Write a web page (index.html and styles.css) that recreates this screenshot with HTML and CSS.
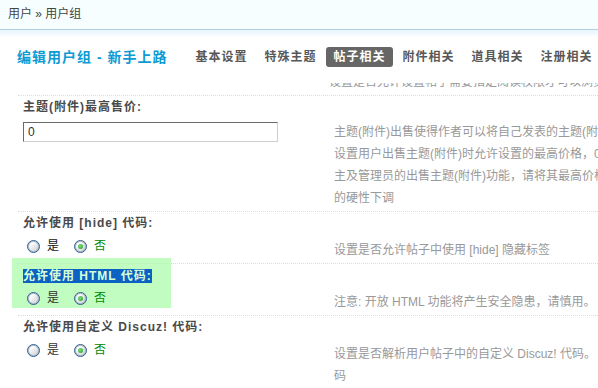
FILE: index.html
```html
<!DOCTYPE html>
<html lang="zh-CN">
<head>
<meta charset="utf-8">
<title>编辑用户组</title>
<link rel="stylesheet" href="styles.css">
</head>
<body>
<div class="crumb">用户 » 用户组</div>
<div class="band"></div>
<div class="head">
  <h3 class="title">编辑用户组 - 新手上路</h3>
  <ul class="tabs">
    <li class="tab">基本设置</li>
    <li class="tab">特殊主题</li>
    <li class="tab active">帖子相关</li>
    <li class="tab">附件相关</li>
    <li class="tab">道具相关</li>
    <li class="tab">注册相关</li>
  </ul>
</div>
<div class="main">
  <div class="clip">
    <div class="body">
      <div class="ctl"></div>
      <div class="desc clipdesc"><div class="line">设置是否允许设置帖子需要指定阅读权限才可以浏览，阅读权限</div></div>
    </div>
  </div>

  <div class="row">
    <div class="label">主题(附件)最高售价:</div>
    <div class="body">
      <div class="ctl ctl-input"><div class="input">0</div></div>
      <div class="desc desc-input">
        <div class="line">主题(附件)出售使得作者可以将自己发表的主题(附件)定价出售，其他用户需支付</div>
        <div class="line">设置用户出售主题(附件)时允许设置的最高价格，0 为不允许用户出售。如需关闭版</div>
        <div class="line">主及管理员的出售主题(附件)功能，请将其最高价格设置为 0，注意：修改此项目会</div>
        <div class="line">的硬性下调</div>
      </div>
    </div>
  </div>

  <div class="row">
    <div class="label">允许使用 [hide] 代码:</div>
    <div class="body">
      <div class="ctl">
        <div class="radios">
          <span class="radio"></span><span class="opt opt-dark">是</span>
          <span class="radio on"></span><span class="opt opt-on">否</span>
        </div>
      </div>
      <div class="desc"><div class="line">设置是否允许帖子中使用 [hide] 隐藏标签</div></div>
    </div>
  </div>

  <div class="row hl">
    <div class="label"><span class="sel">允许使用 HTML 代码:</span></div>
    <div class="body">
      <div class="ctl">
        <div class="radios">
          <span class="radio"></span><span class="opt">是</span>
          <span class="radio on"></span><span class="opt opt-on">否</span>
        </div>
      </div>
      <div class="desc"><div class="line">注意: 开放 HTML 功能将产生安全隐患，请慎用。</div></div>
    </div>
  </div>

  <div class="row">
    <div class="label">允许使用自定义 Discuz! 代码:</div>
    <div class="body">
      <div class="ctl">
        <div class="radios">
          <span class="radio"></span><span class="opt">是</span>
          <span class="radio on"></span><span class="opt opt-on">否</span>
        </div>
      </div>
      <div class="desc">
        <div class="line">设置是否解析用户帖子中的自定义 Discuz! 代码。</div>
        <div class="line">码</div>
      </div>
    </div>
  </div>
</div>
</body>
</html>
```

FILE: styles.css
```css
html {
  margin: 0;
  padding: 0;
  background: #fff;
}
body {
  margin: 0;
  padding: 0;
  width: 598px;
  height: 388px;
  overflow: hidden;
  font-family: "Liberation Sans", "Noto Sans CJK SC", sans-serif;
  font-size: 12px;
  color: #444;
}
.crumb {
  height: 29px;
  line-height: 29px;
  padding-left: 8px;
  background: #f6feff;
  border-bottom: 1px solid #b4cfe3;
  color: #444;
}
.band {
  height: 6px;
  background: linear-gradient(#eaf5fc, #f8fcff);
}
.head {
  display: flex;
  align-items: center;
  padding: 11px 0 0 17px;
  margin-bottom: 16px;
  white-space: nowrap;
}
.title {
  margin: 0 21px 0 0;
  font-size: 14px;
  line-height: 20px;
  font-weight: bold;
  letter-spacing: 1px;
  color: #0e9ad3;
}
.tabs {
  display: flex;
  gap: 3px;
  margin: 0;
  padding: 0;
  list-style: none;
}
.tab {
  padding: 0 7px;
  height: 20px;
  line-height: 20px;
  font-weight: bold;
  letter-spacing: 1px;
  color: #585858;
  border-radius: 3px;
}
.tab.active {
  background: #666;
  color: #fff;
}
.main {
  padding-left: 18px;
}
.clip {
  height: 12px;
  overflow: hidden;
}
.clipdesc {
  margin-top: -12px;
}
.row {
  position: relative;
  border-top: 1px dotted #c6e2f5;
  padding: 1px 0 2px 5px;
}
.label {
  height: 20px;
  line-height: 20px;
  font-weight: bold;
  letter-spacing: 1px;
  color: #4a4a4a;
  white-space: nowrap;
}
.body {
  display: grid;
  grid-template-columns: 311px 1fr;
}
.ctl {
  padding-top: 3px;
}
.desc {
  padding-top: 6px;
  color: #999;
  line-height: 22px;
  white-space: nowrap;
  min-width: 0;
}
.desc .line {
  height: 22px;
}
.clip .desc {
  padding-top: 0;
}
.ctl-input {
  padding-top: 5px;
}
.desc-input {
  padding-top: 4px;
}
.input {
  width: 249px;
  height: 18px;
  line-height: 18px;
  padding-left: 4px;
  border-top: 1px solid #6a6a6a;
  border-left: 1px solid #6a6a6a;
  border-bottom: 1px solid #cfcfcf;
  border-right: 1px solid #cfcfcf;
  color: #333;
  font-size: 12px;
}
.radios {
  display: flex;
  align-items: center;
  height: 20px;
}
.radio {
  position: relative;
  box-sizing: border-box;
  width: 13px;
  height: 13px;
  margin-left: 4px;
  border-radius: 50%;
  border: 1px solid #2e5f8e;
  box-shadow: inset 0 0 0 1px #a9bccd;
  background: linear-gradient(135deg, #ffffff 25%, #c9c9c9 100%);
}
.radio + .opt {
  margin-left: 7px;
}
.opt + .radio {
  margin-left: 15px;
}
.radio.on::after {
  content: "";
  position: absolute;
  left: 3px;
  top: 3px;
  width: 5px;
  height: 5px;
  border-radius: 50%;
  background: radial-gradient(circle at 40% 40%, #7fe07f, #1f9a1f);
}
.opt {
  color: #333;
  line-height: 20px;
}
.opt-dark {
  color: #111;
}
.opt-on {
  color: #080;
}
.hl::before {
  content: "";
  position: absolute;
  left: -6px;
  top: -6px;
  width: 159px;
  height: 50px;
  background: #c1fdc1;
  z-index: -1;
}
.sel {
  display: inline-block;
  height: 14px;
  line-height: 14px;
  vertical-align: middle;
  background: #0b62c2;
  color: #d6ffd6;
}
```
